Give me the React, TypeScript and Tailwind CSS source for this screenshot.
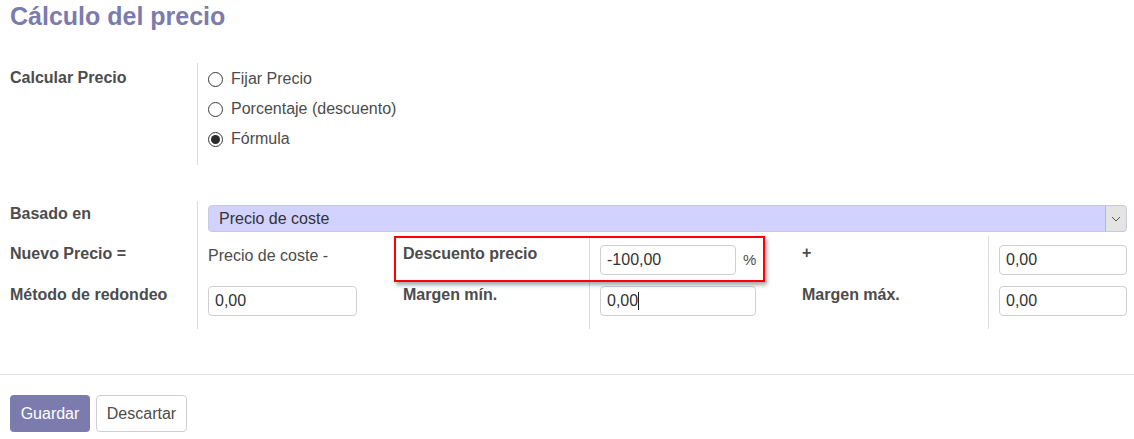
import React from 'react';

const Radio: React.FC<{ label: string; checked?: boolean }> = ({ label, checked }) => (
  <label className="flex items-center gap-[8px] h-[30px]">
    <span className="w-[15px] h-[15px] rounded-full border border-[#3a3a3a] flex items-center justify-center bg-white">
      {checked && <span className="w-[9px] h-[9px] rounded-full bg-[#2b2b2b]" />}
    </span>
    <span className="leading-[20px]">{label}</span>
  </label>
);

const NumInput: React.FC<{ value: string; w: string; caret?: boolean }> = ({ value, w, caret }) => (
  <div className={`${w} h-[30px] border border-[#cfcfcf] rounded-[4px] bg-white flex items-center pl-[6px] text-[#333]`}>
    <span className="leading-[20px]">{value}</span>
    {caret && <span className="w-px h-[18px] bg-[#222]" />}
  </div>
);

export default function App() {
  return (
    <div className="relative w-[1134px] h-[439px] bg-white overflow-hidden font-['Liberation_Sans',Arial,sans-serif] text-[16px] text-[#4c4c4c]">
      {/* Title */}
      <h1 className="px-[10px] pt-[1px] text-[25px] leading-[30px] font-bold text-[#7c7bad]">Cálculo del precio</h1>

      {/* Calcular precio */}
      <div className="flex pl-[10px] mt-[32px]">
        <div className="w-[187px] pt-[5px] font-bold leading-[20px]">Calcular Precio</div>
        <div className="border-l border-[#dcdcdc] pl-[10px] pt-[1px] pb-[11px]">
          <Radio label="Fijar Precio" />
          <Radio label="Porcentaje (descuento)" />
          <Radio label="Fórmula" checked />
        </div>
      </div>

      {/* Basado en / formula */}
      <div className="flex pl-[10px] mt-[36px]">
        <div className="w-[187px] font-bold leading-[20px]">
          <div className="h-[35px] pt-[3px]">Basado en</div>
          <div className="h-[45px] pt-[8px]">Nuevo Precio =</div>
          <div className="h-[48px] pt-[4px]">Método de redondeo</div>
        </div>
        <div className="flex-1 border-l border-[#dcdcdc] pl-[10px] pr-[7px]">
          <div className="h-[35px] pt-[4px]">
            <div className="h-[27px] rounded-[4px] border border-[#c8c8e0] bg-[#d2d2ff] flex items-center text-[#333]">
              <span className="flex-1 pl-[10px] leading-[20px]">Precio de coste</span>
              <span className="w-[21px] h-full bg-[#e4e4e4] border-l border-[#b8b8b8] rounded-r-[4px] flex items-center justify-center">
                <svg width="10" height="6" viewBox="0 0 10 6" fill="none" stroke="#555" strokeWidth="1">
                  <path d="M1 1l4 4 4-4" />
                </svg>
              </span>
            </div>
          </div>
          <div className="flex leading-[20px]">
            <div className="w-[185px]">
              <div className="h-[45px] pt-[10px]">Precio de coste -</div>
              <div className="h-[48px] pt-[5px]"><NumInput value="0,00" w="w-[149px]" /></div>
            </div>
            <div className="w-[196px] pl-[10px] font-bold">
              <div className="h-[45px] pt-[8px]">Descuento precio</div>
              <div className="h-[48px] pt-[4px]">Margen mín.</div>
            </div>
            <div className="w-[203px] border-l border-[#dcdcdc] pl-[10px]">
              <div className="h-[45px] pt-[9px] flex items-start gap-[7px]">
                <NumInput value="-100,00" w="w-[136px]" />
                <span className="pt-[5px] text-[15px]">%</span>
              </div>
              <div className="h-[48px] pt-[5px]"><NumInput value="0,00" w="w-[156px]" caret /></div>
            </div>
            <div className="w-[196px] pl-[10px] font-bold">
              <div className="h-[45px] pt-[7px]">+</div>
              <div className="h-[48px] pt-[4px]">Margen máx.</div>
            </div>
            <div className="flex-1 border-l border-[#dcdcdc] pl-[10px]">
              <div className="h-[45px] pt-[9px]"><NumInput value="0,00" w="w-full" /></div>
              <div className="h-[48px] pt-[5px]"><NumInput value="0,00" w="w-full" /></div>
            </div>
          </div>
        </div>
      </div>

      {/* Footer */}
      <div className="mt-[45px] border-t border-[#e2e2e2] px-[10px] pt-[20px] flex gap-[6px]">
        <button className="w-[80px] h-[37px] rounded-[4px] bg-[#7c7bad] text-white text-[16px]">Guardar</button>
        <button className="w-[91px] h-[37px] rounded-[4px] border border-[#cfcfcf] bg-white text-[#4c4c4c] text-[16px]">Descartar</button>
      </div>

      {/* Highlight annotation */}
      <div className="absolute left-[394px] top-[236px] w-[371px] h-[46px] border-2 border-[#ff0000] shadow-[2px_3px_4px_rgba(0,0,0,0.35)] pointer-events-none" />
    </div>
  );
}
